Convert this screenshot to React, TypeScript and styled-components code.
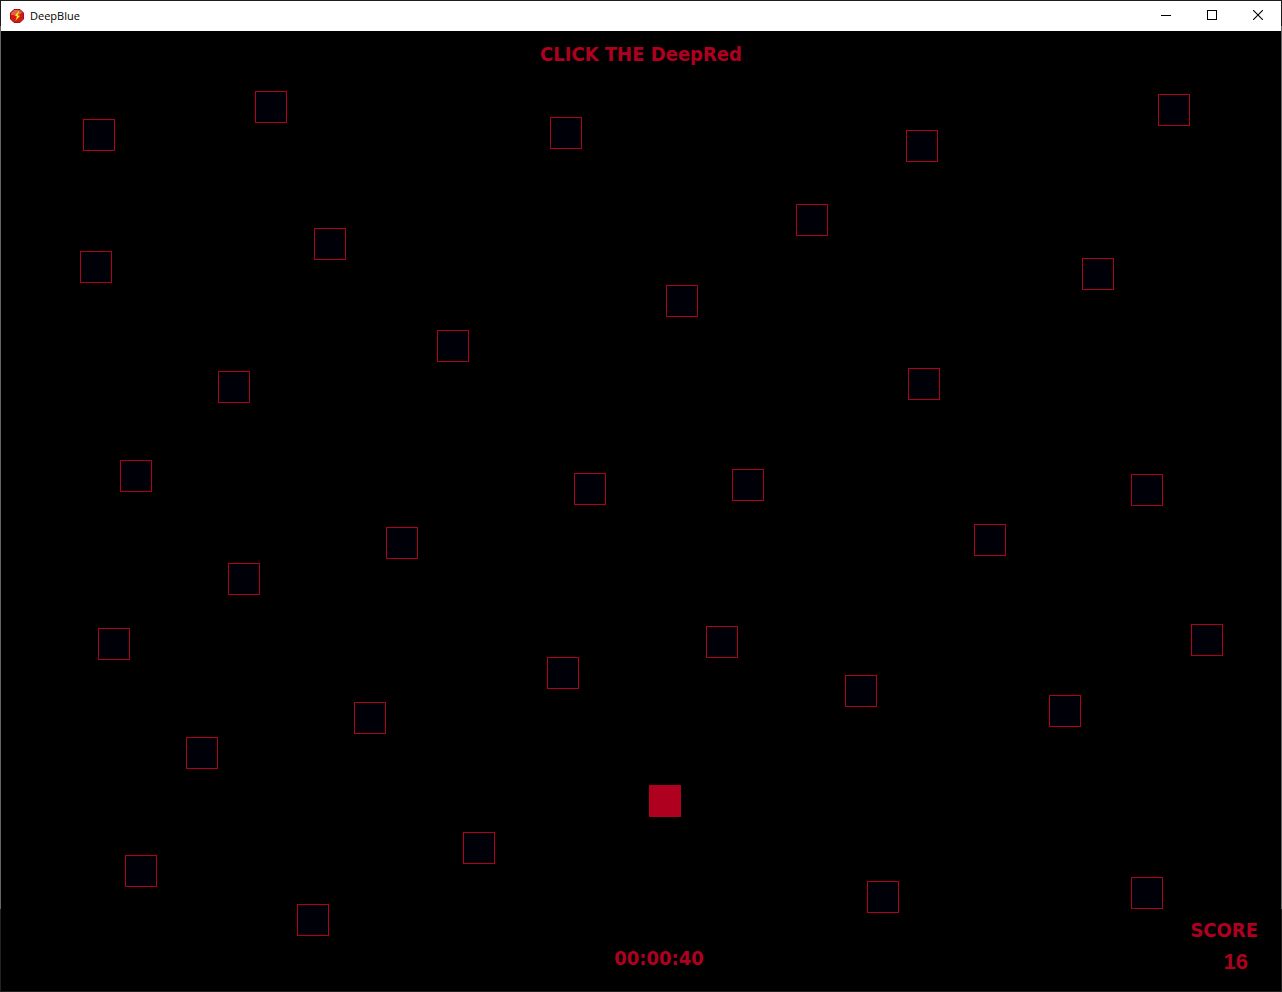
import React, { useState } from 'react';
import styled, { createGlobalStyle } from 'styled-components';

const GlobalStyle = createGlobalStyle`
  *, *::before, *::after { box-sizing: border-box; }
  html, body, #root { height: 100%; margin: 0; }
  body { background: #000; overflow: hidden; }
`;

const RED = '#b00020';

const Window = styled.div`
  display: flex;
  flex-direction: column;
  height: 100%;
  border: 1px solid #1c1c1c;
  border-image: linear-gradient(#1c1c1c 26px, #666 26px calc(100% - 83px), #222 calc(100% - 83px)) 1;
  background: #000;
`;

const TitleBar = styled.header`
  display: flex;
  align-items: center;
  flex: none;
  height: 30px;
  padding-left: 8px;
  background: #fff;
`;

const AppTitle = styled.span`
  flex: 1;
  padding-left: 5px;
  color: #000;
  font: 11px/16px "Open Sans", "Noto Sans", sans-serif;
`;

const CaptionButton = styled.button`
  display: flex;
  align-items: center;
  justify-content: center;
  width: 46px;
  height: 28px;
  padding: 0;
  border: 0;
  background: transparent;
  color: #000;
`;

const CaptionButtons = styled.div`
  display: flex;
  align-self: flex-start;
`;

const Game = styled.main`
  position: relative;
  display: flex;
  flex-direction: column;
  justify-content: space-between;
  flex: 1;
  padding: 11px 23px 17px;
  color: ${RED};
  font: bold 20px/24px "DejaVu Sans Condensed", "DejaVu Sans", sans-serif;
`;

const Heading = styled.h1`
  margin: 0;
  font: inherit;
  text-align: center;
`;

const StatusBar = styled.footer`
  display: grid;
  grid-template-columns: 1fr auto 1fr;
  align-items: end;
`;

const Timer = styled.time`
  grid-column: 2;
  padding: 0 0 4px 36px;
`;

const Score = styled.div`
  justify-self: end;
  display: flex;
  flex-direction: column;
  gap: 8px;
  text-align: right;
`;

const ScoreValue = styled.output`
  padding-right: 10px;
  font: bold 22px/24px "Liberation Sans", Arial, sans-serif;
`;

const Target = styled.button<{ $x: number; $y: number; $active?: boolean }>`
  position: absolute;
  left: ${({ $x }) => $x}px;
  top: ${({ $y }) => $y}px;
  width: 32px;
  height: 32px;
  padding: 0;
  border: 1px solid ${RED};
  background: ${({ $active }) => ($active ? RED : '#000008')};
`;

const targets = [
  [254, 60], [82, 88], [549, 86], [905, 99], [1157, 63],
  [795, 173], [313, 197], [79, 220], [1081, 227], [665, 254],
  [436, 299], [217, 340], [907, 337], [119, 429], [573, 442],
  [731, 438], [1130, 443], [385, 496], [973, 493], [227, 532],
  [97, 597], [705, 595], [1190, 593], [546, 626], [844, 644],
  [1048, 664], [353, 671], [185, 706], [648, 754], [462, 801],
  [124, 824], [866, 850], [1130, 846], [296, 873],
];

const AppIcon = () => (
  <svg width="16" height="16" viewBox="0 0 16 16" aria-hidden="true">
    <path d="M5 1.500h6L14.500 5v6L11 14.500H5L1.500 11V5z" fill="#d91515" stroke="#9c1414" />
    <path d="M5.400 2h5.200L13 4.400 10 7H2V5.400z" fill="#f4827a" opacity=".65" />
    <path d="M9.800 2.500 5.400 7.500l2.200 1-1.400 4.800L11.300 8 8.900 7l1.700-3z" fill="#ffe51f" stroke="#8a4a00" strokeWidth=".5" />
  </svg>
);

export default function App() {
  const [active, setActive] = useState(28);
  const [score, setScore] = useState(16);

  const hit = (index: number) => {
    if (index !== active) return;
    setScore(score + 1);
    setActive((index + 11) % targets.length);
  };

  return (
    <>
      <GlobalStyle />
      <Window>
        <TitleBar>
          <AppIcon />
          <AppTitle>DeepBlue</AppTitle>
          <CaptionButtons>
            <CaptionButton aria-label="Minimize">
              <svg width="10" height="10" shapeRendering="crispEdges"><path d="M0 5.5h10" stroke="currentColor" /></svg>
            </CaptionButton>
            <CaptionButton aria-label="Maximize">
              <svg width="10" height="10" shapeRendering="crispEdges"><path d="M.5.5h9v9h-9z" fill="none" stroke="currentColor" /></svg>
            </CaptionButton>
            <CaptionButton aria-label="Close">
              <svg width="10" height="10"><path d="m0 0 10 10M10 0 0 10" stroke="currentColor" strokeWidth="1.1" /></svg>
            </CaptionButton>
          </CaptionButtons>
        </TitleBar>
        <Game>
          <Heading>CLICK THE DeepRed</Heading>
          {targets.map(([x, y], i) => (
            <Target key={i} $x={x} $y={y} $active={i === active} aria-label={`Square ${i + 1}`} onClick={() => hit(i)} />
          ))}
          <StatusBar>
            <Timer>00:00:40</Timer>
            <Score>
              <label htmlFor="score">SCORE</label>
              <ScoreValue id="score">{score}</ScoreValue>
            </Score>
          </StatusBar>
        </Game>
      </Window>
    </>
  );
}
